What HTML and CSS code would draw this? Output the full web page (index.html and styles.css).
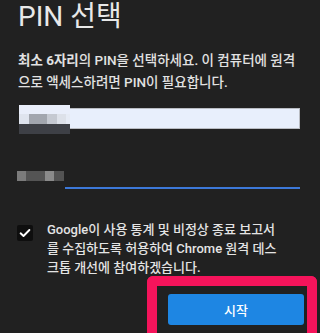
FILE: index.html
```html
<!DOCTYPE html>
<html lang="ko">
<head>
<meta charset="utf-8">
<link rel="stylesheet" href="styles.css">
</head>
<body>
<main class="page">
  <h1 class="title">PIN 선택</h1>
  <p class="desc"><b>최소 6자리</b>의 PIN을 선택하세요. 이 컴퓨터에 원격으로 액세스하려면 PIN이 필요합니다.</p>
  <div class="field field-filled">
    <div class="blur-a">
      <div class="blur-a-top"></div>
      <div class="blur-a-mid"><i class="s1"></i><i class="s2"></i><i class="s3"></i><i class="s4"></i><i class="s5"></i></div>
      <div class="blur-a-low"></div>
    </div>
    <div class="input-fill"></div>
  </div>
  <div class="field field-pin">
    <div class="blur-b"><i class="t1"></i><i class="t2"></i><i class="t3"></i><i class="t4"></i></div>
    <div class="underline"></div>
  </div>
  <div class="consent">
    <span class="check"><svg viewBox="0 0 16 16" width="16" height="16"><path d="M3.6 8.3 L6.5 11 L12.4 5" fill="none" stroke="#ffffff" stroke-width="1.9" stroke-linecap="round" stroke-linejoin="round"/></svg></span>
    <p class="consent-text">Google이 사용 통계 및 비정상 종료 보고서를 수집하도록 허용하여 Chrome 원격 데스크톱 개선에 참여하겠습니다.</p>
  </div>
  <div class="actions">
    <div class="highlight"><button class="start">시작</button></div>
  </div>
</main>
</body>
</html>
```
FILE: styles.css
```css
html, body {
  margin: 0;
  padding: 0;
  background: #212121;
  height: 100%;
  overflow: hidden;
}
.page {
  padding: 0 20px 0 18px;
  font-family: "Roboto", "Noto Sans CJK KR", sans-serif;
  color: #e2e2e2;
}
.title {
  margin: 0;
  padding-top: 0;
  font-size: 28px;
  line-height: 34px;
  font-weight: 400;
  color: #e8e8e8;
  letter-spacing: 0;
}
.desc {
  margin: 15px 0 0;
  font-size: 13.5px;
  line-height: 22px;
  font-weight: 500;
  word-break: break-all;
}
.desc b { font-weight: 700; }
.field { display: flex; }
.field-filled {
  margin-top: 12px;
  margin-left: 1px;
  height: 29px;
}
.blur-a {
  width: 51px;
  display: flex;
  flex-direction: column;
}
.blur-a-top { height: 9px; background: #e9eefa; }
.blur-a-mid { height: 10px; display: flex; }
.blur-a-mid i { display: block; height: 100%; }
.s1 { width: 10px; background: #dfe4ee; }
.s2 { width: 18px; background: #a2a6ae; }
.s3 { width: 10px; background: #c5c9d1; }
.s4 { width: 9px; background: #dde1e9; }
.s5 { width: 4px; background: #e6ebf5; }
.blur-a-low { height: 10px; background: #3e4046; }
.input-fill {
  flex: 1;
  margin-top: 3px;
  height: 19px;
  background: #e8effc;
  border: 1px solid #b9bcc2;
  border-left: none;
}
.field-pin {
  margin-top: 37px;
  margin-left: -1px;
  height: 18px;
  align-items: flex-start;
}
.blur-b { display: flex; width: 47px; height: 10px; }
.blur-b i { display: block; height: 100%; }
.t1 { width: 9px; background: #7b7b7b; }
.t2 { width: 19px; background: #545454; }
.t3 { width: 9px; background: #8a8a8a; }
.t4 { width: 10px; background: #535353; }
.underline {
  flex: 1;
  margin-left: 1px;
  margin-top: 16px;
  height: 2px;
  background: #3c78d8;
}
.consent {
  display: flex;
  gap: 14px;
  margin-top: 35px;
  margin-left: -1px;
}
.check {
  flex: none;
  width: 16px;
  height: 16px;
  margin-top: 1px;
  background: #0e0e0e;
  border-radius: 2px;
  display: flex;
}
.consent-text {
  margin: -4px 0 0;
  width: 238px;
  font-size: 13px;
  line-height: 19px;
  font-weight: 500;
  color: #e4e4e4;
  word-break: break-all;
}
.actions {
  display: flex;
  justify-content: flex-end;
  margin-top: -1px;
  margin-right: -17px;
}
.highlight {
  border: 10px solid #f5145b;
  border-bottom: none;
  border-radius: 6px 6px 0 0;
  padding: 8px 3px 8px 11px;
  width: 136px;
}
.start {
  display: block;
  width: 136px;
  height: 31px;
  border: none;
  border-radius: 3px;
  background: #1e86e3;
  color: #ffffff;
  font-family: "Roboto", "Noto Sans CJK KR", sans-serif;
  font-size: 13px;
  font-weight: 500;
  padding: 0;
}
```
